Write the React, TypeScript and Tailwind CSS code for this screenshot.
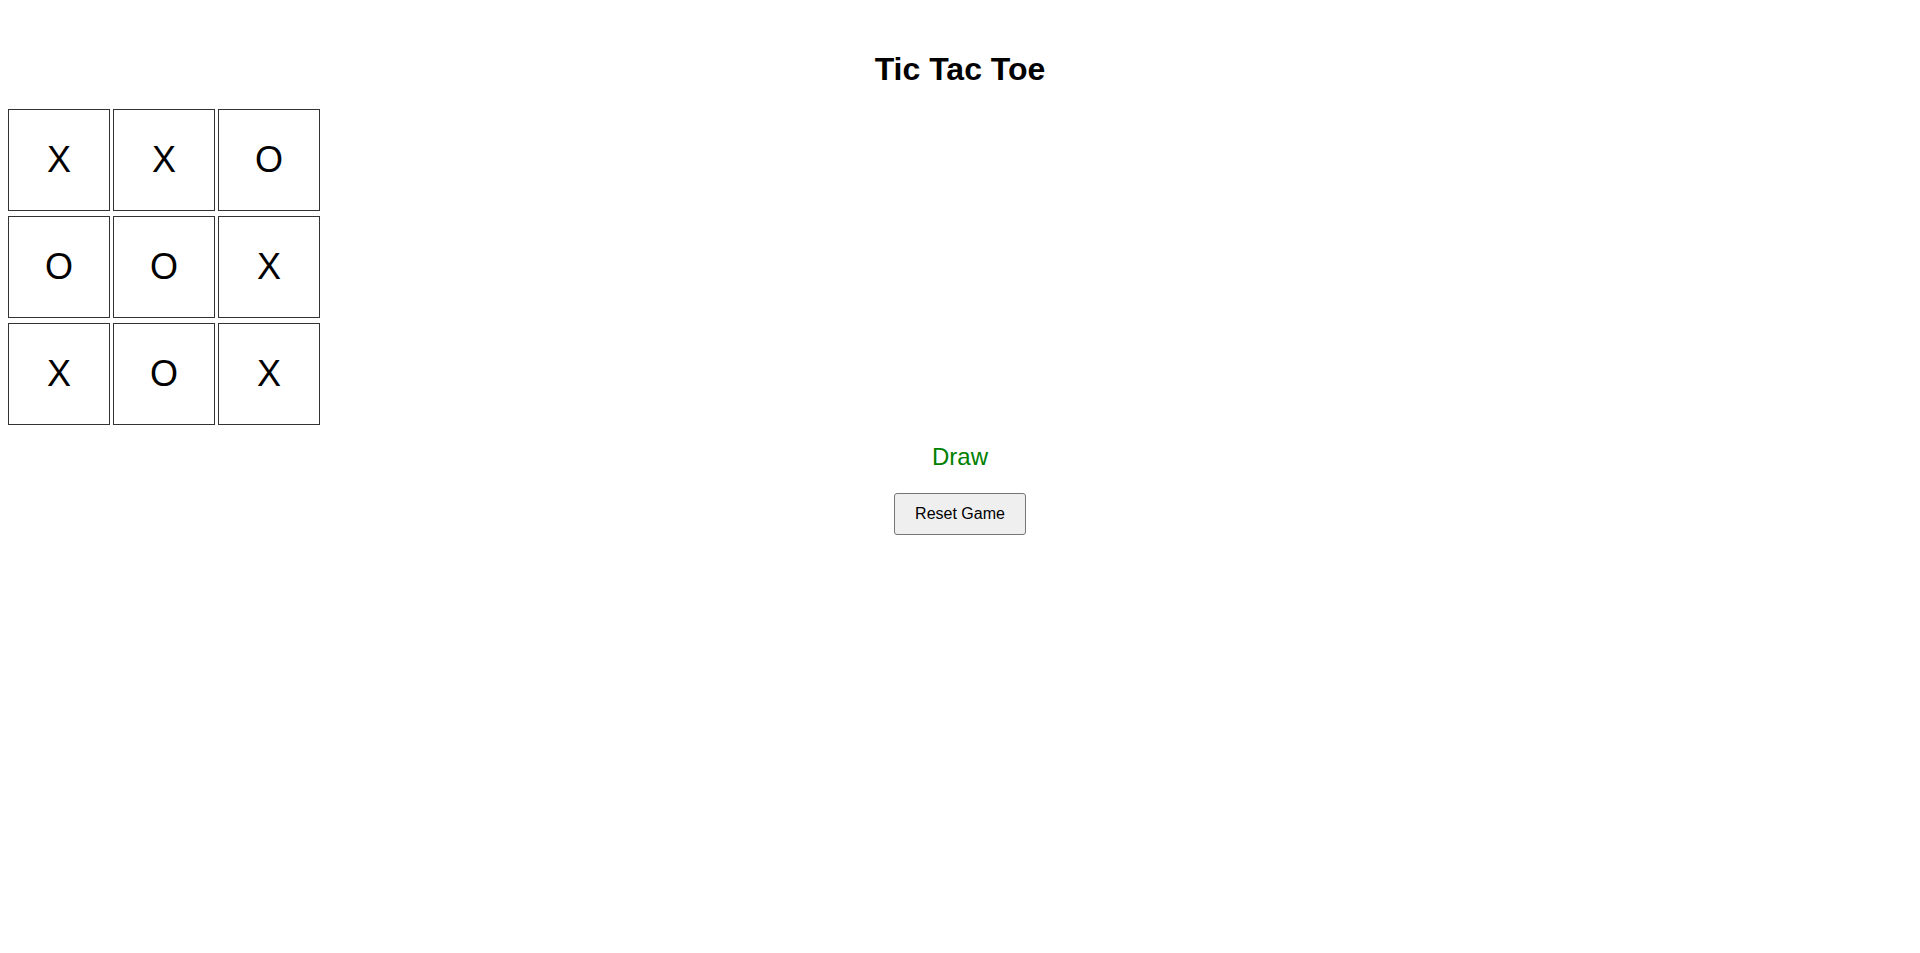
const board = ['X', 'X', 'O', 'O', 'O', 'X', 'X', 'O', 'X'];

export default function App() {
  return (
    <div className="min-h-screen bg-white p-2 font-['Liberation_Sans',Arial,sans-serif] text-black">
      <h1 className="mt-[43px] text-center text-[32px] font-bold leading-[37px]">Tic Tac Toe</h1>
      <div className="mt-[21px] grid grid-cols-[repeat(3,102px)] gap-x-[3px] gap-y-[5px]">
        {board.map((v, i) => (
          <button
            key={i}
            className="flex h-[102px] w-[102px] items-center justify-center border border-[#333] bg-white text-[36px] leading-none text-black"
          >
            {v}
          </button>
        ))}
      </div>
      <div className="mt-[18px] text-center text-[24px] leading-[28px] text-[#008000]">Draw</div>
      <div className="mt-[22px] flex justify-center">
        <button className="h-[42px] rounded-[3px] border border-[#767676] bg-[#efefef] px-5 text-[16px] leading-[20px] text-black">
          Reset Game
        </button>
      </div>
    </div>
  );
}
